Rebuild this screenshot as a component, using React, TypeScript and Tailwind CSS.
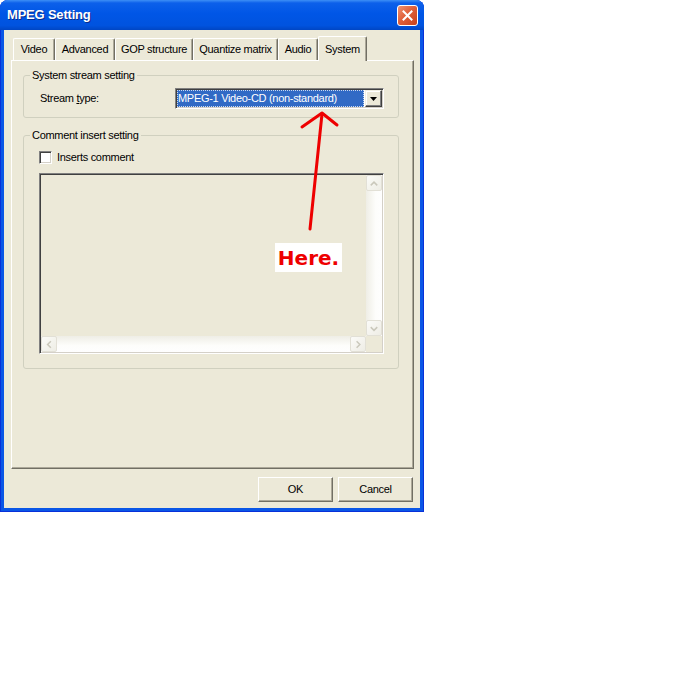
import React from "react";

const tabs = [
  { label: "Video", w: "w-[42px]" },
  { label: "Advanced", w: "w-[60px]" },
  { label: "GOP structure", w: "w-[78px]" },
  { label: "Quantize matrix", w: "w-[85px]" },
  { label: "Audio", w: "w-[40px]" },
];

function Chevron({ dir }: { dir: "up" | "down" | "left" | "right" }) {
  const d = {
    up: "M4 9.5 L7.5 6 L11 9.5",
    down: "M4 6 L7.5 9.5 L11 6",
    left: "M9.5 4 L6 7.5 L9.5 11",
    right: "M6 4 L9.5 7.5 L6 11",
  }[dir];
  return (
    <div className="w-[16px] h-[16px] shrink-0 rounded-[2px] border border-[#e2e0d6] bg-[linear-gradient(135deg,#fbfbf8,#eeede5)] flex items-center justify-center">
      <svg width="15" height="15" viewBox="0 0 15 15" fill="none">
        <path d={d} stroke="#cac8bb" strokeWidth={1.6} />
      </svg>
    </div>
  );
}

function ClassicButton({ children }: { children: React.ReactNode }) {
  return (
    <button className="w-[75px] h-[25px] bg-[#ece9d8] border border-t-white border-l-white border-r-[#716f64] border-b-[#716f64] shadow-[inset_-1px_-1px_0_#aca899] flex items-center justify-center text-black">
      {children}
    </button>
  );
}

export default function App() {
  return (
    <div className="w-[693px] h-[676px] bg-white relative font-['Liberation_Sans',Arial,sans-serif] text-[11px] tracking-[-0.3px] text-black">
      <div className="w-[424px] h-[512px] flex flex-col rounded-t-[8px] overflow-hidden bg-[#0a56e6] shadow-[inset_1px_0_0_#0831d9,inset_-1px_0_0_#0831d9,inset_0_-1px_0_#0831d9]">
        {/* title bar */}
        <div className="h-[30px] shrink-0 flex items-center justify-between pl-[7px] pr-[6px] bg-[linear-gradient(to_bottom,#3d8ff6_0%,#0c60ea_10%,#0056e6_45%,#0053df_85%,#0046c4_100%)]">
          <span className="text-white font-bold text-[13px] tracking-[-0.2px] [text-shadow:1px_1px_0_#0b2c8a]">
            MPEG Setting
          </span>
          <div className="w-[21px] h-[21px] rounded-[3px] border border-white bg-[linear-gradient(135deg,#ee9373_0%,#e0603a_45%,#c8401a_100%)] flex items-center justify-center">
            <svg width="13" height="13" viewBox="0 0 13 13">
              <path d="M2.5 2.5 L10.5 10.5 M10.5 2.5 L2.5 10.5" stroke="white" strokeWidth={2} strokeLinecap="square" />
            </svg>
          </div>
        </div>

        {/* client */}
        <div className="flex-1 mx-[4px] mb-[4px] bg-[#ece9d8] flex flex-col pl-[7px] pr-[6px] pt-[6px]">
          {/* tabs */}
          <div className="flex items-end ml-[2px]">
            {tabs.map((t) => (
              <div
                key={t.label}
                className={`${t.w} h-[22px] flex items-center justify-center border-t border-l border-t-white border-l-white border-r border-r-[#716f64] rounded-t-[2px] shadow-[inset_-1px_0_0_#aca899]`}
              >
                {t.label}
              </div>
            ))}
            <div className="relative w-[49px] h-[25px] mb-[-1px] bg-[#ece9d8] flex items-start pt-[4px] justify-center border-t border-l border-t-white border-l-white border-r border-r-[#716f64] rounded-t-[2px] shadow-[inset_-1px_0_0_#aca899]">
              System
            </div>
          </div>

          {/* panel */}
          <div className="h-[409px] border border-t-white border-l-white border-r-[#716f64] border-b-[#716f64] shadow-[inset_-1px_-1px_0_#aca899] pl-[11px] pt-[8px]">
            <fieldset className="w-[376px] border border-[#d0d0bf] rounded-[3px] pl-[6px] pr-[14px] pt-[6px] pb-[8px]">
              <legend className="px-[2px] leading-[13px]">System stream setting</legend>
              <div className="flex items-center justify-between">
                <span className="ml-[10px]">
                  Stream <span className="underline">t</span>ype:
                </span>
                <div className="w-[209px] h-[21px] flex bg-white p-[1px] border border-t-[#808080] border-l-[#808080] border-b-white border-r-white shadow-[inset_1px_1px_0_#404040,inset_-1px_-1px_0_#d4d0c8]">
                  <div className="w-[187px] h-[17px] bg-[#316ac5] text-white flex items-center pl-[1px] outline-1 outline-dotted outline-[#cad9f0] -outline-offset-1 whitespace-nowrap overflow-hidden">
                    MPEG-1 Video-CD (non-standard)
                  </div>
                  <div className="ml-[1px] w-[17px] h-[17px] bg-[#ece9d8] border border-t-[#f1efe2] border-l-[#f1efe2] border-r-[#404040] border-b-[#404040] shadow-[inset_-1px_-1px_0_#808080,inset_1px_1px_0_#fff] flex items-center justify-center">
                    <svg width="7" height="4" viewBox="0 0 7 4">
                      <path d="M0 0 H7 L3.5 4 Z" fill="black" />
                    </svg>
                  </div>
                </div>
              </div>
            </fieldset>

            <fieldset className="mt-[11px] w-[376px] border border-[#d0d0bf] rounded-[3px] pl-[6px] pr-[14px] pt-[9px] pb-[14px]">
              <legend className="px-[2px] leading-[13px]">Comment insert setting</legend>
              <div className="flex items-center gap-[5px] ml-[9px] h-[13px]">
                <div className="w-[13px] h-[13px] bg-white border border-t-[#808080] border-l-[#808080] border-b-white border-r-white shadow-[inset_1px_1px_0_#404040,inset_-1px_-1px_0_#d4d0c8]" />
                <span>Inserts comment</span>
              </div>
              <div className="mt-[9px] ml-[9px] w-[345px] h-[181px] flex flex-col border border-t-[#808080] border-l-[#808080] border-b-white border-r-white p-[1px] shadow-[inset_1px_1px_0_#404040,inset_-1px_-1px_0_#d4d0c8]">
                <div className="flex flex-1">
                  <div className="flex-1 bg-[#ece9d8]" />
                  <div className="w-[16px] flex flex-col bg-[linear-gradient(to_right,#efeee6,#fdfdfb_60%,#fefefe)]">
                    <Chevron dir="up" />
                    <div className="flex-1" />
                    <Chevron dir="down" />
                  </div>
                </div>
                <div className="flex h-[16px]">
                  <div className="flex-1 flex bg-[linear-gradient(to_bottom,#efeee6,#fdfdfb_60%,#fefefe)]">
                    <Chevron dir="left" />
                    <div className="flex-1" />
                    <Chevron dir="right" />
                  </div>
                  <div className="w-[16px] bg-[#ece9d8]" />
                </div>
              </div>
            </fieldset>
          </div>

          {/* buttons */}
          <div className="mt-[8px] flex justify-end gap-[5px] mr-[1px]">
            <ClassicButton>OK</ClassicButton>
            <ClassicButton>Cancel</ClassicButton>
          </div>
        </div>
      </div>

      {/* annotation */}
      <svg className="absolute left-0 top-0 pointer-events-none" width="424" height="512" viewBox="0 0 424 512" fill="none">
        <path d="M310 229 L322 114" stroke="#ee0000" strokeWidth={3} strokeLinecap="round" />
        <path d="M302 127 L322 113 L337 125" stroke="#ee0000" strokeWidth={3} strokeLinecap="round" strokeLinejoin="round" />
      </svg>
      <div className="absolute left-[275px] top-[243px] w-[67px] h-[29px] bg-white flex items-center justify-center font-['DejaVu_Sans',sans-serif] font-bold text-[20px] tracking-normal text-[#ee0000]">
        Here.
      </div>
    </div>
  );
}
